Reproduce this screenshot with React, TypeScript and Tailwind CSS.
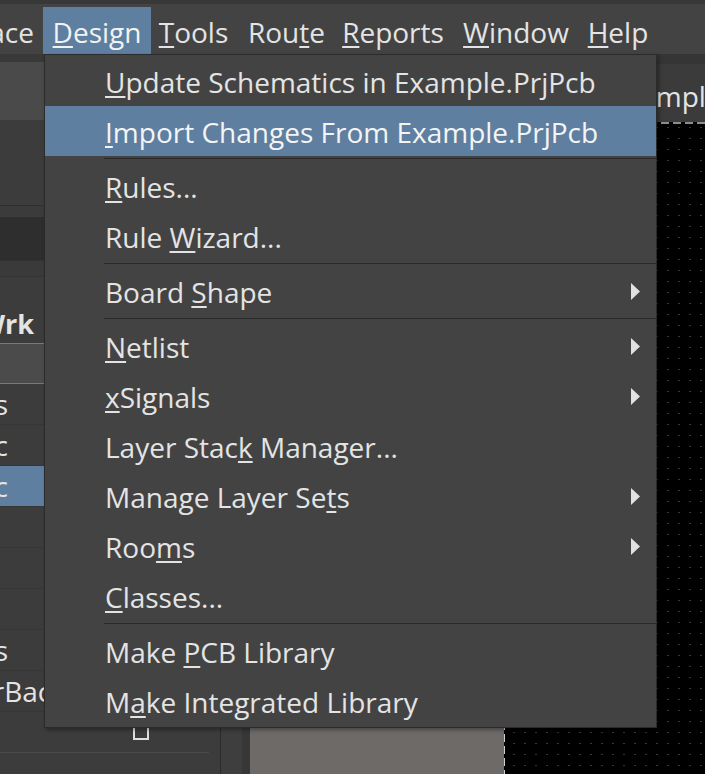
import React from 'react';

function U({ text, i }: { text: string; i: number }) {
  if (i < 0) return <>{text}</>;
  return (
    <>
      {text.slice(0, i)}
      <span className="underline decoration-[1.5px] underline-offset-[3px]">{text[i]}</span>
      {text.slice(i + 1)}
    </>
  );
}

type MenuEntry =
  | { sep: true }
  | { sep?: false; label: string; u: number; sub?: boolean; hl?: boolean };

const entries: MenuEntry[] = [
  { label: 'Update Schematics in Example.PrjPcb', u: 0 },
  { label: 'Import Changes From Example.PrjPcb', u: 0, hl: true },
  { sep: true },
  { label: 'Rules...', u: 0 },
  { label: 'Rule Wizard...', u: 5 },
  { sep: true },
  { label: 'Board Shape', u: 6, sub: true },
  { sep: true },
  { label: 'Netlist', u: 0, sub: true },
  { label: 'xSignals', u: 0, sub: true },
  { label: 'Layer Stack Manager...', u: 10 },
  { label: 'Manage Layer Sets', u: 15, sub: true },
  { label: 'Rooms', u: 3, sub: true },
  { label: 'Classes...', u: 0 },
  { sep: true },
  { label: 'Make PCB Library', u: 5 },
  { label: 'Make Integrated Library', u: 1 },
];

const bar = [
  { label: 'Design', u: 0, w: 'w-[108px]', active: true },
  { label: 'Tools', u: 0, w: 'w-[85px]' },
  { label: 'Route', u: 3, w: 'w-[101px]' },
  { label: 'Reports', u: 0, w: 'w-[112px]' },
  { label: 'Window', u: 0, w: 'w-[134px]' },
  { label: 'Help', u: 0, w: 'w-[70px]' },
];

const rows: { t: string; hl?: boolean; wide?: boolean; box?: boolean }[] = [
  { t: 'Libraries' },
  { t: 'Example.SchDoc' },
  { t: 'Example.PcbDoc', hl: true },
  { t: '' },
  { t: '' },
  { t: '' },
  { t: 'Settings' },
  { t: 'PowerBack', wide: true },
  { t: '', box: true },
];

function Arrow() {
  return (
    <svg width="9" height="17" viewBox="0 0 9 17" className="shrink-0">
      <polygon points="0,0 9,8.5 0,17" fill="#e2e2e2" />
    </svg>
  );
}

export default function App() {
  return (
    <div className="relative w-[705px] h-[774px] overflow-hidden bg-[#434343] flex flex-col font-['Open_Sans',sans-serif] text-[28px] text-[#e4e4e4] leading-none">
      {/* title strip */}
      <div className="h-[4px] bg-[#383838] shrink-0" />
      {/* menubar */}
      <div className="h-[50px] shrink-0 flex items-end bg-[#434343]">
        <div className="w-[43px] h-[47px] overflow-hidden flex justify-end items-center pt-[3px] pr-[9px] whitespace-nowrap">
          Place
        </div>
        {bar.map((b) => (
          <div
            key={b.label}
            className={`${b.w} h-[47px] flex justify-center items-center pt-[3px] whitespace-nowrap ${b.active ? 'bg-[#5e7fa0] text-[#f2f2f2]' : ''}`}
          >
            <U text={b.label} i={b.u} />
          </div>
        ))}
      </div>
      {/* body */}
      <div className="flex-1 flex min-h-0">
        {/* left panel */}
        <div className="w-[220px] shrink-0 flex flex-col bg-[#3c3c3c]">
          <div className="h-[8px] bg-[#393939]" />
          <div className="h-[58px] bg-[#4a4a4a]" />
          <div className="h-[85px] bg-[#3c3c3c]" />
          <div className="h-px bg-[#2f2f2f]" />
          <div className="h-[11px] bg-[#3b3b3b]" />
          <div className="h-[43px] bg-[#2e2e2e]" />
          <div className="h-px bg-[#333333]" />
          <div className="h-[15px] bg-[#3a3a3a]" />
          <div className="h-px bg-[#353535]" />
          <div className="h-[66px] flex items-end pb-[6px] overflow-hidden">
            <div className="w-[34px] flex justify-end whitespace-nowrap font-bold text-[27px]">PcbWrk</div>
          </div>
          <div className="h-px bg-[#5e7fa0]" />
          <div className="h-[39px] bg-[#4b4b4b]" />
          <div className="h-px bg-[#5e7fa0]" />
          {rows.map((r, idx) => (
            <div key={idx} className="flex flex-col shrink-0">
              <div className={`h-[40px] flex items-center overflow-hidden ${r.hl ? 'bg-[#5e7fa0]' : ''}`}>
                {r.t && (
                  <div className={`${r.wide ? 'w-[66px]' : 'w-[8px]'} shrink-0 flex justify-end whitespace-nowrap`}>{r.t}</div>
                )}
                {r.box && <div className="ml-[133px] w-[16px] h-[16px] border-2 border-[#e0e0e0]" />}
              </div>
              <div className={`h-px ${idx === rows.length - 1 ? 'mr-[11px] bg-[#4a4a4a]' : 'bg-[#363636]'}`} />
            </div>
          ))}
          <div className="flex-1" />
        </div>
        <div className="w-px bg-[#2b2b2b] shrink-0" />
        {/* main area */}
        <div className="flex-1 flex flex-col min-w-0">
          <div className="h-[68px] shrink-0 flex flex-col bg-[#3b3b3b]">
            <div className="h-[10px] bg-[#353535]" />
            <div className="flex-1 flex items-center pl-[389px] pt-[6px] whitespace-nowrap">Example.PcbDoc</div>
          </div>
          <div className="flex-1 flex min-h-0">
            <div className="w-[21px] bg-[#3e3e3e]" />
            <div className="w-[8px] bg-[#373737]" />
            <div className="w-[254px] bg-[#6d6a68]" />
            <div className="w-px bg-[repeating-linear-gradient(to_bottom,#cfcfcf_0_8px,transparent_8px_12px)] bg-black" />
            <div className="flex-1 flex flex-col bg-black">
              <div className="h-[2px] bg-[repeating-linear-gradient(to_right,#8c8c8c_0_8px,transparent_8px_12px)]" />
              <div className="flex-1 bg-[radial-gradient(circle,#6e6e6e_0.6px,transparent_0.9px)] bg-[length:11px_11px] bg-[position:3.5px_-2px]" />
            </div>
          </div>
        </div>
      </div>

      {/* dropdown menu */}
      <div className="absolute left-[44px] top-[54px] w-[613px] border border-[#2b2b2b] bg-[#434343] py-px flex flex-col shadow-[2px_2px_4px_rgba(0,0,0,0.35)]">
        {entries.map((e, idx) =>
          e.sep ? (
            <div key={idx} className="h-[5px] flex items-center pl-[59px]">
              <div className="h-px flex-1 bg-[#2a2a2a]" />
            </div>
          ) : (
            <div
              key={idx}
              className={`h-[50px] flex items-center pl-[60px] pr-[16px] ${e.hl ? 'bg-[#5e7fa0] text-[#f4f4f4]' : ''}`}
            >
              <span className="flex-1 whitespace-nowrap pt-[2px]">
                <U text={e.label} i={e.u} />
              </span>
              {e.sub && <Arrow />}
            </div>
          )
        )}
      </div>
    </div>
  );
}
